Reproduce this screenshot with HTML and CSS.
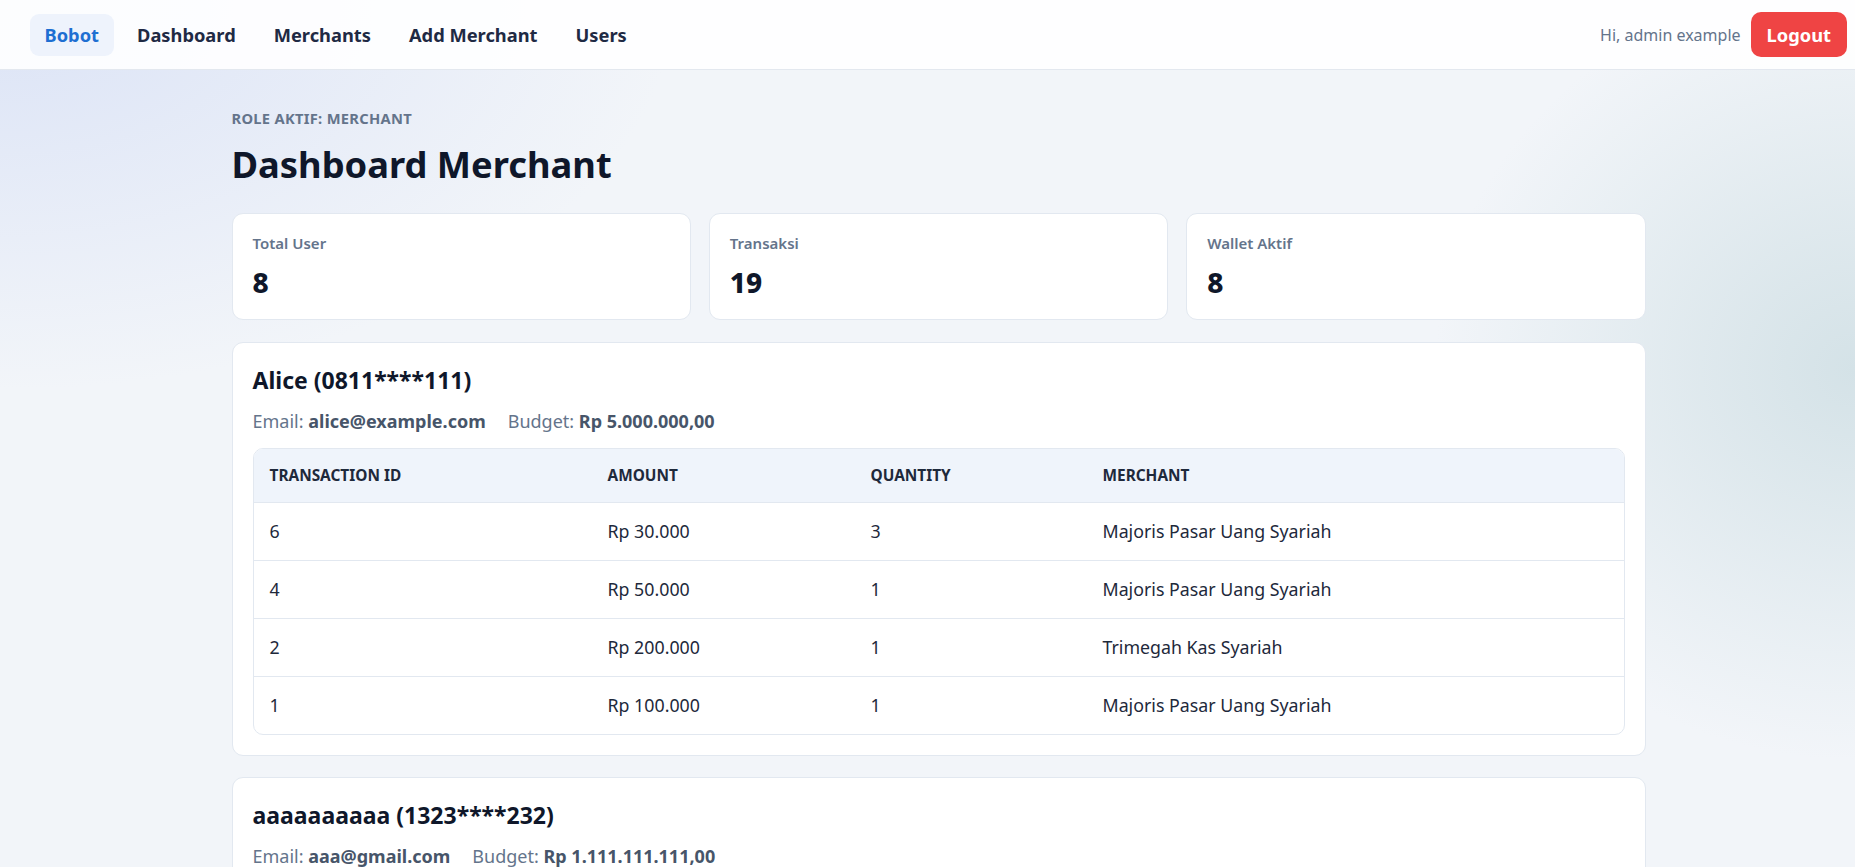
FILE: index.html
```html
<!DOCTYPE html>
<html lang="id">
<head>
  <meta charset="UTF-8">
  <meta name="viewport" content="width=device-width, initial-scale=1.0">
  <title>Dashboard Merchant</title>
  <link rel="stylesheet" href="styles.css">
</head>
<body>
  <nav class="navbar">
    <div class="nav-links">
      <a href="#" class="nav-link active">Bobot</a>
      <a href="#" class="nav-link">Dashboard</a>
      <a href="#" class="nav-link">Merchants</a>
      <a href="#" class="nav-link">Add Merchant</a>
      <a href="#" class="nav-link">Users</a>
    </div>
    <div class="nav-user">
      <span class="greeting">Hi, admin example</span>
      <button class="logout-btn">Logout</button>
    </div>
  </nav>

  <div class="page">
    <main class="container">
      <p class="role-label">Role aktif: merchant</p>
      <h1 class="page-title">Dashboard Merchant</h1>

      <div class="stats">
        <div class="stat-card">
          <p class="stat-label">Total User</p>
          <p class="stat-value">8</p>
        </div>
        <div class="stat-card">
          <p class="stat-label">Transaksi</p>
          <p class="stat-value">19</p>
        </div>
        <div class="stat-card">
          <p class="stat-label">Wallet Aktif</p>
          <p class="stat-value">8</p>
        </div>
      </div>

      <section class="user-card">
        <h2 class="user-name">Alice (0811****111)</h2>
        <div class="user-meta">
          <span>Email: <b>alice@example.com</b></span>
          <span>Budget: <b>Rp 5.000.000,00</b></span>
        </div>
        <div class="table-wrap">
          <table class="tx-table">
            <colgroup>
              <col class="col-id">
              <col class="col-amount">
              <col class="col-qty">
              <col>
            </colgroup>
            <thead>
              <tr>
                <th>Transaction ID</th>
                <th>Amount</th>
                <th>Quantity</th>
                <th>Merchant</th>
              </tr>
            </thead>
            <tbody>
              <tr><td>6</td><td>Rp 30.000</td><td>3</td><td>Majoris Pasar Uang Syariah</td></tr>
              <tr><td>4</td><td>Rp 50.000</td><td>1</td><td>Majoris Pasar Uang Syariah</td></tr>
              <tr><td>2</td><td>Rp 200.000</td><td>1</td><td>Trimegah Kas Syariah</td></tr>
              <tr><td>1</td><td>Rp 100.000</td><td>1</td><td>Majoris Pasar Uang Syariah</td></tr>
            </tbody>
          </table>
        </div>
      </section>

      <section class="user-card">
        <h2 class="user-name">aaaaaaaaaa (1323****232)</h2>
        <div class="user-meta">
          <span>Email: <b>aaa@gmail.com</b></span>
          <span>Budget: <b>Rp 1.111.111.111,00</b></span>
        </div>
      </section>
    </main>
  </div>
</body>
</html>
```

FILE: styles.css
```css
html {
  scrollbar-width: none;
}

body {
  margin: 0;
  font-family: "Noto Sans", "Open Sans", sans-serif;
  color: #1e293b;
  min-height: 100vh;
  background:
    radial-gradient(ellipse 900px 520px at 0% 0%, #dbe3f6 0%, rgba(219, 227, 246, 0) 75%),
    radial-gradient(ellipse 560px 520px at 100% 40%, #d4e2e7 0%, rgba(212, 226, 231, 0) 75%),
    #f2f5f9;
}

/* top bar */
.navbar {
  height: 70px;
  box-sizing: border-box;
  display: flex;
  align-items: center;
  justify-content: space-between;
  padding: 0 8px 0 30px;
  background: rgba(255, 255, 255, 0.9);
  border-bottom: 1px solid #e3e8ef;
}

.nav-links {
  display: flex;
  gap: 9px;
}

.nav-link {
  font-size: 18.3px;
  font-weight: 700;
  line-height: 22px;
  padding: 10px 14.5px;
  border-radius: 9px;
  color: #1f2a44;
  text-decoration: none;
}

.nav-link.active {
  color: #1e6fd2;
  background-color: #eef3fc;
}

.nav-user {
  display: flex;
  align-items: center;
  gap: 10px;
}

.greeting {
  font-size: 16px;
  color: #64748b;
}

.logout-btn {
  font-family: inherit;
  font-size: 18.3px;
  font-weight: 700;
  line-height: 23px;
  padding: 11px 16px;
  border: none;
  border-radius: 10px;
  background-color: #ef4444;
  color: white;
  cursor: pointer;
}

/* content */
.page {
  padding-left: 22px;
}

.container {
  max-width: 1414px;
  margin: 0 auto;
  padding-top: 38px;
}

.role-label {
  margin: 0;
  font-size: 14.7px;
  line-height: 21px;
  font-weight: 700;
  text-transform: uppercase;
  letter-spacing: 0.02em;
  color: #64748b;
}

.page-title {
  margin: 11px 0 25px;
  font-size: 36.3px;
  line-height: 48px;
  font-weight: 700;
  color: #0f172a;
}

.stats {
  display: grid;
  grid-template-columns: repeat(3, 1fr);
  gap: 18px;
  margin-bottom: 22px;
}

.stat-card,
.user-card {
  background: white;
  border: 1px solid #e2e8f0;
  border-radius: 11px;
}

.stat-card {
  padding: 19px 20px 20px;
}

.stat-label {
  margin: 0 0 12px;
  font-size: 15px;
  line-height: 20px;
  font-weight: 600;
  color: #64748b;
}

.stat-value {
  margin: 0;
  font-size: 28px;
  line-height: 34px;
  font-weight: 800;
  color: #0f172a;
}

.user-card {
  padding: 22px 20px 20px;
  margin-bottom: 21px;
}

.user-name {
  margin: 0;
  font-size: 23px;
  line-height: 30px;
  font-weight: 700;
  color: #0f172a;
}

.user-meta {
  display: flex;
  gap: 22px;
  margin: 14px 0 15px;
  font-size: 18px;
  line-height: 24px;
  color: #64748b;
}

.user-meta b {
  color: #475569;
}

.table-wrap {
  border: 1px solid #e2e8f0;
  border-radius: 10px;
  overflow: hidden;
}

.tx-table {
  width: 100%;
  border-collapse: collapse;
  table-layout: fixed;
}

.col-id { width: 338px; }
.col-amount { width: 263px; }
.col-qty { width: 232px; }

.tx-table th {
  text-align: left;
  padding: 16px 16px;
  font-size: 15.4px;
  line-height: 21px;
  font-weight: 700;
  text-transform: uppercase;
  color: #1e293b;
  background-color: #eff4fb;
  border-bottom: 1px solid #e2e8f0;
}

.tx-table td {
  padding: 16px 16px;
  font-size: 17.8px;
  line-height: 25px;
  color: #1e293b;
  border-bottom: 1px solid #e2e8f0;
}

.tx-table tbody tr:last-child td {
  border-bottom: none;
}
```
